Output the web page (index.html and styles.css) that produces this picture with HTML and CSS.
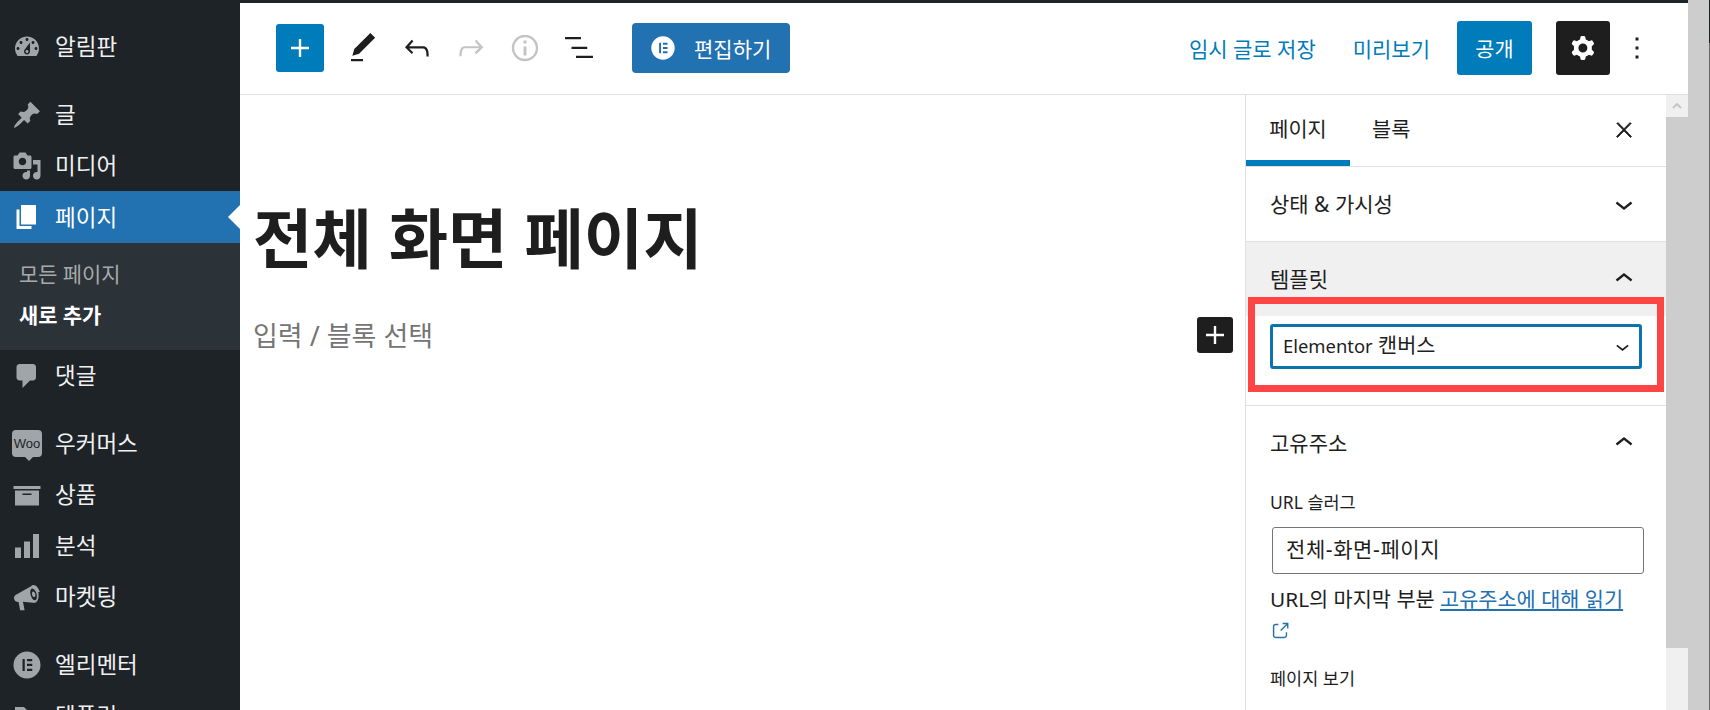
FILE: index.html
```html
<!DOCTYPE html>
<html lang="ko">
<head>
<meta charset="utf-8">
<title>전체 화면 페이지</title>
<link rel="stylesheet" href="styles.css">
</head>
<body>
<div class="app">
  <nav class="side">
    <ul class="menu">
      <li class="item"><svg class="dash" viewBox="0 0 20 20"><path d="M3.76 16h12.48c1.1-1.37 1.76-3.11 1.76-5 0-4.42-3.58-8-8-8s-8 3.58-8 8c0 1.89.66 3.63 1.76 5zM10 4c.55 0 1 .45 1 1s-.45 1-1 1-1-.45-1-1 .45-1 1-1zM6 6c.55 0 1 .45 1 1s-.45 1-1 1-1-.45-1-1 .45-1 1-1zm8 0c.55 0 1 .45 1 1s-.45 1-1 1-1-.45-1-1 .45-1 1-1zm-5.37 5.55L12 7v6c0 1.1-.9 2-2 2s-2-.9-2-2c0-.57.24-1.08.63-1.45zM4 10c.55 0 1 .45 1 1s-.45 1-1 1-1-.45-1-1 .45-1 1-1zm12 0c.55 0 1 .45 1 1s-.45 1-1 1-1-.45-1-1 .45-1 1-1zm-5 3c0-.55-.45-1-1-1s-1 .45-1 1 .45 1 1 1 1-.45 1-1z" fill-rule="evenodd"/></svg>알림판</li>
      <li class="item gap"><svg class="dash" viewBox="0 0 20 20"><path d="M10.44 3.02l1.82-1.82 6.36 6.35-1.83 1.82c-1.05-.68-2.48-.57-3.41.36l-.75.75c-.92.93-1.04 2.35-.35 3.41l-1.83 1.82-2.41-2.41-2.8 2.79c-.42.42-3.38 2.71-3.8 2.29s1.86-3.39 2.28-3.81l2.79-2.79L4.1 9.36l1.83-1.82c1.05.69 2.48.57 3.4-.36l.75-.75c.93-.92 1.05-2.35.36-3.41z"/></svg>글</li>
      <li class="item"><svg class="dash" viewBox="0 0 20 20"><path d="M13 11V4c0-.55-.45-1-1-1h-1.67L9 1H5L3.67 3H2c-.55 0-1 .45-1 1v7c0 .55.45 1 1 1h10c.55 0 1-.45 1-1zM7 4.5c1.38 0 2.5 1.12 2.5 2.5S8.38 9.5 7 9.5 4.5 8.38 4.5 7 5.62 4.5 7 4.5zM14 6h5v10.5c0 1.38-1.12 2.5-2.5 2.5S14 17.88 14 16.5s1.12-2.5 2.5-2.5c.17 0 .34.02.5.05V9h-3V6zm-4 8.05V13h2v3.5c0 1.38-1.12 2.5-2.5 2.5S7 17.88 7 16.5 8.12 14 9.5 14c.17 0 .34.02.5.05z" fill-rule="evenodd"/></svg>미디어</li>
      <li class="item current"><svg class="dash" viewBox="0 0 20 20"><path d="M6 15V2h10v13H6zm-1 1h8v2H3V5h2v11z"/></svg>페이지</li>
      <li class="sub">
        <div class="sub-item">모든 페이지</div>
        <div class="sub-item strong">새로 추가</div>
      </li>
      <li class="item"><svg class="dash" viewBox="0 0 20 20"><path d="M5 2h9c1.1 0 2 .9 2 2v7c0 1.1-.9 2-2 2h-2l-5 5v-5H5c-1.1 0-2-.9-2-2V4c0-1.1.9-2 2-2z"/></svg>댓글</li>
      <li class="item gap"><span class="woo"><span class="woo-text">Woo</span></span>우커머스</li>
      <li class="item"><svg class="dash" viewBox="0 0 20 20"><path d="M19 4v2H1V4h18zM2 7h16v10H2V7zm11 3V9H7v1h6z" fill-rule="evenodd"/></svg>상품</li>
      <li class="item"><svg class="dash" viewBox="0 0 20 20"><path d="M18 18V2h-4v16h4zm-6 0V7H8v11h4zm-6 0v-7H2v7h4z"/></svg>분석</li>
      <li class="item"><svg class="dash" viewBox="0 0 20 20"><path d="M18.5 6.6c-.8-3-2.9-5-4.600-4.600-.5.1-.9.4-1.200.8L3.300 8.200c-1.500.6-2.200 1.900-1.900 3.200.3 1.200 1.500 2.100 3 2l1 5.400h3l-1.100-5.600 6.600.7c.4.1.9.1 1.300 0 1.800-.5 3.100-3.300 2.300-7.300zm-3 5.600c-1 .3-2.400-1.200-3-3.400-.6-2.200-.2-4.200.8-4.500 1-.3 2.400 1.200 3 3.400.6 2.200.2 4.200-.8 4.500zm-.6-2.200c-.6.2-1.200-.5-1.500-1.500-.3-1.100 0-2 .5-2.200.6-.2 1.300.5 1.600 1.500.3 1.100 0 2-.6 2.200z" fill-rule="evenodd"/></svg>마켓팅</li>
      <li class="item gap"><svg class="dash" viewBox="0 0 20 20"><path d="M10 1a9 9 0 1 0 0 18 9 9 0 0 0 0-18zM7 6h1.500v8H7V6zm3 0h3.500v1.500H10V6zm0 3.200h3.500v1.500H10V9.200zm0 3.300h3.500V14H10v-1.500z" fill-rule="evenodd"/></svg>엘리멘터</li>
      <li class="item"><svg class="dash" viewBox="0 0 20 20"><path d="M2 4h6l2 2h8v11H2z"/></svg>템플릿</li>
    </ul>
  </nav>

  <main class="main">
    <header class="top">
      <div class="tools">
        <button class="add"><svg class="i36" viewBox="0 0 24 24"><path d="M18 11.200h-5.200V6h-1.600v5.200H6v1.600h5.200V18h1.600v-5.200H18z"/></svg></button>
        <svg class="tool" viewBox="0 0 24 24"><path d="M20.100 5.100L16.900 2 6.200 12.700l-1.300 4.400 4.500-1.300L20.100 5.100zM4 20.800h8v-1.500H4v1.500z"/></svg>
        <svg class="tool" viewBox="0 0 24 24"><path d="M18.300 11.700c-.6-.6-1.400-.9-2.300-.9H6.700l2.900-3.300-1.100-1-4.500 5L8.500 16l1-1-2.700-2.700H16c.5 0 .9.2 1.300.5 1 1 1 3.400 1 4.500v.3h1.500v-.2c0-1.500 0-4.300-1.500-5.700z"/></svg>
        <svg class="tool off" viewBox="0 0 24 24"><path d="M15.600 6.500l-1.100 1 2.900 3.300H8c-.9 0-1.700.3-2.300.9-1.400 1.500-1.400 4.200-1.400 5.600v.2h1.500v-.3c0-1.100 0-3.500 1-4.500.3-.3.7-.5 1.300-.5h9.200L14.500 15l1.100 1.100 4.600-4.600-4.600-5z"/></svg>
        <svg class="tool off" viewBox="0 0 24 24"><path d="M12 3.200c-4.800 0-8.800 3.900-8.800 8.800 0 4.800 3.900 8.800 8.800 8.800 4.800 0 8.800-3.900 8.800-8.800 0-4.800-4-8.800-8.800-8.800zm0 16c-4 0-7.200-3.300-7.200-7.200C4.800 8 8 4.800 12 4.800s7.200 3.300 7.200 7.200c0 4-3.200 7.200-7.200 7.200zM11 17h2v-6h-2v6zm0-8h2V7h-2v2z"/></svg>
        <svg class="tool" viewBox="0 0 24 24"><path d="M2.700 4.600h10.600v1.500H2.700zM7 11.100h10.500v1.500H7zM10 17.100h11.300v1.500H10z"/></svg>
        <button class="edit"><svg class="edit-i" viewBox="0 0 20 20"><path d="M10 1a9 9 0 1 0 0 18 9 9 0 0 0 0-18zM7 6h1.500v8H7V6zm3 0h3.500v1.500H10V6zm0 3.200h3.500v1.500H10V9.200zm0 3.300h3.500V14H10v-1.500z" fill-rule="evenodd"/></svg>편집하기</button>
      </div>
      <div class="actions">
        <a class="link draft">임시 글로 저장</a>
        <a class="link preview">미리보기</a>
        <button class="publish">공개</button>
        <button class="gear"><svg class="i36" viewBox="0 0 24 24"><path fill-rule="evenodd" d="M10.289 4.836A1 1 0 0111.275 4h1.306a1 1 0 01.987.836l.244 1.466c.787.26 1.503.679 2.108 1.218l1.393-.522a1 1 0 011.216.437l.653 1.130a1 1 0 01-.23 1.273l-1.148.944a6.025 6.025 0 010 2.435l1.149.946a1 1 0 01.23 1.272l-.653 1.130a1 1 0 01-1.216.437l-1.394-.522c-.605.54-1.32.958-2.108 1.218l-.244 1.466a1 1 0 01-.987.836h-1.306a1 1 0 01-.986-.836l-.244-1.466a5.995 5.995 0 01-2.108-1.218l-1.394.522a1 1 0 01-1.217-.436l-.653-1.131a1 1 0 01.23-1.272l1.149-.946a6.026 6.026 0 010-2.435l-1.148-.944a1 1 0 01-.23-1.272l.653-1.131a1 1 0 011.217-.437l1.393.522a5.994 5.994 0 012.108-1.218l.244-1.466zM14.929 12a3 3 0 11-6 0 3 3 0 016 0z"/></svg></button>
        <svg class="kebab" viewBox="0 0 24 24"><path d="M13 19h-2v-2h2v2zm0-6h-2v-2h2v2zm0-6h-2V5h2v2z"/></svg>
      </div>
    </header>

    <div class="work">
      <section class="canvas">
        <h1 class="title">전체 화면 페이지</h1>
        <div class="para">
          <span class="hint">입력 / 블록 선택</span>
          <button class="inline-add"><svg class="i36" viewBox="0 0 24 24"><path d="M18 11.200h-5.200V6h-1.600v5.200H6v1.600h5.200V18h1.600v-5.200H18z"/></svg></button>
        </div>
      </section>

      <aside class="panel">
        <div class="tabs">
          <div class="tab active">페이지</div>
          <div class="tab">블록</div>
          <svg class="close" viewBox="0 0 24 24"><path d="M13 11.800l6.100-6.300-1-1-6.100 6.200-6.100-6.200-1 1 6.100 6.300-6.500 6.700 1 1 6.500-6.600 6.500 6.600 1-1z"/></svg>
        </div>
        <div class="sec">
          <div class="sec-head"><span>상태 &amp; 가시성</span><svg class="chev" viewBox="0 0 24 24"><path d="M17.500 11.600L12 16l-5.500-4.400.9-1.200L12 14l4.500-3.600 1 1.200z"/></svg></div>
        </div>
        <div class="sec tpl">
          <div class="sec-head shade"><span>템플릿</span><svg class="chev" viewBox="0 0 24 24"><path d="M6.500 12.400L12 8l5.500 4.400-.9 1.200L12 10l-4.500 3.600-1-1.200z"/></svg></div>
          <div class="tpl-body">
            <div class="select"><span class="select-text"><span class="latin">Elementor</span> 캔버스</span><svg class="select-chev" viewBox="0 0 24 24"><path d="M17.500 11.600L12 16l-5.500-4.400.9-1.200L12 14l4.500-3.600 1 1.200z"/></svg></div>
          </div>
          <div class="mark"></div>
        </div>
        <div class="sec last">
          <div class="sec-head"><span>고유주소</span><svg class="chev" viewBox="0 0 24 24"><path d="M6.500 12.400L12 8l5.500 4.400-.9 1.200L12 10l-4.500 3.600-1-1.200z"/></svg></div>
          <div class="perma">
            <div class="label">URL 슬러그</div>
            <div class="input">전체-화면-페이지</div>
            <p class="help">URL의 마지막 부분 <a class="more">고유주소에 대해 읽기</a><svg class="ext" viewBox="0 0 24 24"><path d="M18.200 17c0 .7-.6 1.200-1.200 1.200H7c-.7 0-1.200-.6-1.200-1.200V7c0-.7.6-1.200 1.200-1.200h3.200V4.200H7C5.500 4.200 4.200 5.500 4.200 7v10c0 1.500 1.200 2.800 2.800 2.800h10c1.500 0 2.800-1.200 2.800-2.800v-3.600h-1.500V17zM14.900 3v1.500h3.700l-6.400 6.400 1.100 1.100 6.400-6.400v3.700h1.500V3h-6.300z"/></svg></p>
            <div class="label view">페이지 보기</div>
          </div>
        </div>
      </aside>

      <div class="inner-bar">
        <div class="arrow"><svg class="arrow-i" viewBox="0 0 10 6"><path d="M1 5l4-4 4 4" /></svg></div>
        <div class="thumb"></div>
        <div class="track"></div>
      </div>
    </div>
  </main>

  <div class="outer-bar"><div class="edge"></div></div>
</div>
</body>
</html>
```
FILE: styles.css
```css
* { box-sizing: border-box; }
html, body { margin: 0; height: 100%; overflow: hidden; background: #fff; }
body { font-family: "Noto Sans", "Noto Sans CJK KR", sans-serif; color: #1e1e1e; }
button { font: inherit; border: 0; padding: 0; margin: 0; }
ul { list-style: none; margin: 0; padding: 0; }
svg { display: block; fill: currentColor; flex: none; }

.app { display: grid; grid-template-columns: 240px 1448px 22px; height: 710px; overflow: hidden; }

/* admin menu */
.side { background: #1d2327; color: #f0f0f1; padding-top: 21px; overflow: hidden; }
.item { display: flex; align-items: center; height: 51px; padding: 2px 0 0 12px; font-size: 22.5px; line-height: 1; }
.item.gap { margin-top: 17px; }
.dash { width: 30px; height: 30px; margin: -2px 13px 0 0; color: #a0a5aa; }
.current { height: 52px; background: #2271b1; color: #fff; position: relative; }
.current .dash { color: #fff; }
.current::after { content: ""; position: absolute; right: 0; top: 14px; border: 12px solid transparent; border-left-width: 0; border-right-color: #fff; }
.sub { background: #2c3338; height: 107px; padding-top: 11px; }
.sub-item { height: 41px; line-height: 41px; padding-left: 19px; font-size: 20.9px; color: #a7aaad; }
.sub-item.strong { color: #fff; font-weight: 700; }
.woo { width: 30px; height: 27px; margin: -2px 13px 0 0; background: #a0a5aa; border-radius: 4px; position: relative; display: flex; align-items: center; justify-content: center; }
.woo::after { content: ""; position: absolute; left: 13px; bottom: -4px; border: 4px solid transparent; border-top-color: #a0a5aa; border-bottom-width: 0; }
.woo-text { font-family: "Liberation Sans", sans-serif; font-size: 13px; color: #1d2327; }

/* main column */
.main { display: flex; flex-direction: column; min-width: 0; height: 710px; border-top: 3px solid #1d2327; }
.top { height: 92px; flex: none; display: flex; justify-content: space-between; align-items: center; border-bottom: 1px solid #e0e0e0; padding: 0 0 1px 36px; }
.tools { display: flex; align-items: center; }
.add { width: 48px; height: 48px; background: #007cba; color: #fff; border-radius: 3px; display: flex; align-items: center; justify-content: center; margin-right: 21px; }
.i36 { width: 36px; height: 36px; }
.tool { width: 36px; height: 36px; color: #1e1e1e; margin-right: 18px; }
.tool.off { color: #c4c4c4; }
.edit { display: flex; align-items: center; width: 158px; height: 50px; margin-left: 17px; background: #2271b1; color: #fff; border-radius: 4px; font-size: 21px; padding-left: 18px; }
.edit-i { width: 26px; height: 26px; margin-right: 18px; }
.actions { display: flex; align-items: center; padding-right: 33px; }
.link { color: #007cba; font-size: 21px; }
.draft { margin-right: 37px; }
.preview { margin-right: 27px; }
.publish { width: 75px; height: 54px; background: #007cba; color: #fff; border-radius: 3px; font-size: 20.8px; margin-right: 24px; }
.gear { width: 54px; height: 54px; background: #1e1e1e; color: #fff; border-radius: 3px; display: flex; align-items: center; justify-content: center; margin-right: 9px; }
.kebab { width: 36px; height: 36px; color: #1e1e1e; }

.work { flex: 1; display: flex; min-height: 0; }

/* canvas */
.canvas { flex: 1; min-width: 0; padding: 0 0 0 13px; }
.title { margin: 108px 0 0; font-size: 64.6px; line-height: 70px; font-weight: 700; color: #1e1e1e; }
.para { display: flex; justify-content: space-between; align-items: center; margin-top: 44px; height: 36px; padding-right: 12px; }
.hint { font-size: 27px; line-height: 36px; color: #757575; padding-top: 1px; }
.inline-add { width: 36px; height: 36px; background: #1e1e1e; color: #fff; border-radius: 3px; display: flex; align-items: center; justify-content: center; }

/* settings panel */
.panel { width: 421px; flex: none; border-left: 1px solid #e0e0e0; overflow: hidden; }
.tabs { height: 72px; display: flex; align-items: flex-start; border-bottom: 1px solid #e0e0e0; position: relative; }
.tab { width: 104px; height: 71px; line-height: 68px; text-align: center; font-size: 20.8px; }
.tab + .tab { width: 80px; text-align: left; padding-left: 22px; }
.tab.active { border-bottom: 6px solid #007cba; }
.close { position: absolute; right: 30px; top: 23px; width: 24px; height: 24px; stroke: currentColor; stroke-width: .8; }
.sec { border-bottom: 1px solid #e0e0e0; }
.sec.last { border-bottom: 0; }
.sec-head { height: 74px; display: flex; justify-content: space-between; align-items: center; padding: 0 24px 0 24px; font-size: 21px; }
.sec-head span { padding-bottom: 2px; }
.chev { width: 36px; height: 36px; }
.tpl { position: relative; }
.shade { background: #f0f0f0; }
.tpl-body { height: 89px; padding: 8px 24px 0; }
.select { width: 372px; height: 45px; border: 3px solid #0b74aa; border-radius: 3px; display: flex; align-items: center; justify-content: space-between; padding: 0 3px 0 10px; font-size: 20.8px; background: #fff; }
.select-text { padding-bottom: 6px; }
.latin { font-size: 18.4px; }
.select-chev { width: 27px; height: 27px; }
.mark { position: absolute; left: 2px; top: 55px; width: 416px; height: 95px; border: 7px solid #ff4444; }
.perma { padding: 0 24px; }
.label { font-size: 17.500px; line-height: 24px; margin-top: 10px; }
.input { width: 372px; height: 47px; margin: 13px 0 0 2px; border: 1px solid #757575; border-radius: 3px; padding: 0 13px; line-height: 43px; font-size: 21px; letter-spacing: .6px; }
.help { margin: 10px 0 0; font-size: 20.8px; line-height: 31px; }
.more { color: #2271b1; text-decoration: underline; }
.ext { width: 22px; height: 22px; color: #2271b1; margin: 5px 0 0 -1px; }
.label.view { margin-top: 24px; }

/* scrollbars */
.inner-bar { width: 22px; flex: none; display: flex; flex-direction: column; }
.arrow { height: 22px; background: #f0f0f0; display: flex; align-items: center; justify-content: center; flex: none; }
.arrow-i { width: 10px; height: 6px; fill: none; stroke: #c4c4c4; stroke-width: 2; }
.thumb { height: 531px; background: #cdcdcd; flex: none; }
.track { flex: 1; background: #f0f0f0; }
.outer-bar { background: #cdcdcd; display: flex; justify-content: flex-end; }
.edge { width: 1px; background: linear-gradient(#1d2327 43px, #666 43px); }
```
